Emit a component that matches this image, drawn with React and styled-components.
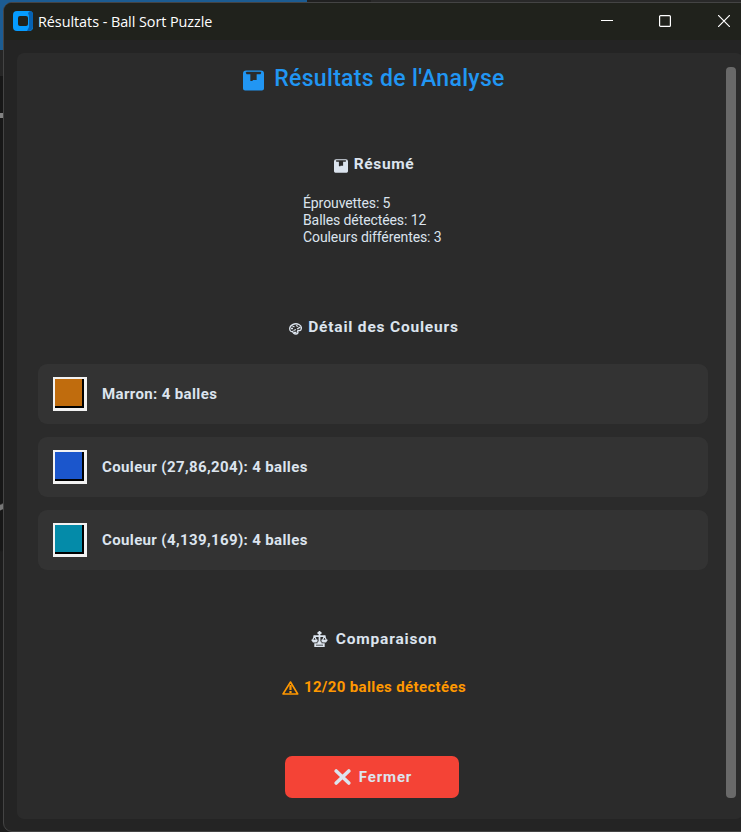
import React from 'react';
import styled, { createGlobalStyle } from 'styled-components';

const GlobalStyle = createGlobalStyle`
  * { box-sizing: border-box; }
  body { margin: 0; background: #1b1b1b; overflow: hidden; }
`;

const Desktop = styled.div`
  width: 741px;
  height: 832px;
  padding: 2px 0 0 3px;
  overflow: hidden;
  background:
    linear-gradient(#828282, #828282) 0 113px / 4px 5px no-repeat,
    linear-gradient(155deg, transparent 30%, #777 40%, #777 65%, transparent 72%) 0 499px / 4px 15px no-repeat,
    linear-gradient(#1c5c92, #1c5c92) 0 0 / 307px 3px no-repeat,
    linear-gradient(#1c5c92, #1c5c92) 0 0 / 12px 50px no-repeat,
    linear-gradient(#252525, #252525) 0 50px / 4px 26px no-repeat,
    linear-gradient(90deg, #202020 64px, #292929 64px) 307px 0 / 434px 3px no-repeat,
    linear-gradient(#171717 550px, #1d1d1d 552px);
  font-family: Roboto, "Noto Sans", sans-serif;
  color: #dce4ee;
`;

const Window = styled.main`
  width: 750px;
  height: 830px;
  border: 1px solid #444;
  border-radius: 9px;
  background: #242424;
  overflow: hidden;
`;

const TitleBar = styled.header`
  display: flex;
  align-items: center;
  width: 737px;
  height: 37px;
  padding: 0 0 1px 9px;
  background: #20221c;
  box-shadow: 20px 0 #20221c;
  color: #fff;
  > svg { margin-bottom: 1px; }
`;

const WindowTitle = styled.span`
  flex: 1;
  margin-left: 5px;
  font: 14.4px "Open Sans", "Noto Sans", sans-serif;
  letter-spacing: -0.05px;
  white-space: nowrap;
`;

const WindowControls = styled.div`
  display: flex;
  padding-right: 11px;
  svg { display: block; }
  svg + svg { margin-left: 46px; }
  svg:last-child { margin-left: 47px; }
`;

const Panel = styled.section`
  display: flex;
  width: 726px;
  height: 766px;
  margin: 13px 0 0 13px;
  border-radius: 7px;
  background: #2b2b2b;
`;

const Content = styled.div`
  width: 670px;
  margin-left: 21px;
  display: flex;
  flex-direction: column;
  align-items: center;
`;

const Scrollbar = styled.div`
  width: 10px;
  height: 731px;
  margin: 14px 0 0 18px;
  border-radius: 4px;
  background: #696969;
`;

const Heading = styled.h1`
  display: flex;
  align-items: center;
  gap: 10px;
  height: 28px;
  margin: 11px 0 0 2px;
  font-size: 23px;
  font-weight: 500;
  letter-spacing: 0.32px;
  color: #2196f3;
  white-space: nowrap;
  svg { margin-top: 5px; }
`;

const SectionTitle = styled.h2`
  display: flex;
  align-items: center;
  gap: ${({ $gap = 6 }) => $gap}px;
  height: 20px;
  margin: ${({ $top }) => $top}px 0 0 2px;
  font-size: 15.5px;
  font-weight: 700;
  letter-spacing: ${({ $tracking = 0.65 }) => $tracking}px;
  white-space: nowrap;
  svg { margin-top: ${({ $drop = 4 }) => $drop}px; }
`;

const Summary = styled.div`
  width: 140px;
  margin-top: 21px;
  font-size: 14px;
  line-height: 17px;
  letter-spacing: -0.1px;
  white-space: nowrap;
`;

const ColorList = styled.div`
  display: grid;
  gap: 13px;
  width: 100%;
  margin-top: 27px;
`;

const ColorRow = styled.div`
  display: flex;
  align-items: center;
  gap: 15px;
  height: 60px;
  padding-left: 15px;
  border-radius: 9px;
  background: #333;
  font-size: 15px;
  font-weight: 700;
  letter-spacing: 0.37px;
`;

const Swatch = styled.span`
  width: 34px;
  height: 34px;
  border: 2px solid #f2f2f2;
  border-right-width: 3px;
  border-bottom-width: 3px;
  background: ${({ $color }) => $color};
  box-shadow: inset -2px -2px #000;
`;

const Warning = styled.p`
  display: flex;
  align-items: center;
  gap: 5px;
  height: 20px;
  margin: 28px 0 0 2px;
  color: #ff9800;
  font-size: 15px;
  font-weight: 700;
  letter-spacing: 0.36px;
  svg { margin-top: 2px; }
`;

const CloseButton = styled.button`
  display: flex;
  align-items: center;
  justify-content: center;
  gap: 8px;
  width: 174px;
  height: 42px;
  margin: 59px 2px 0 0;
  padding: 0 0 0 2px;
  border: 0;
  border-radius: 7px;
  background: #f44336;
  color: #dce4ee;
  font: 700 15px Roboto, sans-serif;
  letter-spacing: 0.85px;
`;

const AppLogo = () => (
  <svg width="20" height="20" viewBox="0 0 20 20">
    <rect width="20" height="20" rx="4" fill="#069cff" />
    <path d="M15 2 17 0q3 0 3 4v11q0 5-5 5h-1l2-4V5Z" fill="#0662b2" />
    <rect x="5" y="5" width="10" height="10" rx="2" fill="#20221c" />
  </svg>
);

const BoxIcon = ({ size }) => (
  <svg width={size} height={size} viewBox="0 0 20 20">
    <path fillRule="evenodd" fill="currentColor" d="M3 0.5h14q3 0 3 3v14q0 2-2 2H2q-2 0-2-2v-14q0-3 3-3ZM3.5 1.7 2.5 2.5l1 1.5H7v6.5h2.2v-1H13V4h3.5l1-1.5-1-.8Z" />
  </svg>
);

const PaletteIcon = () => (
  <svg width="13" height="12" viewBox="0 0 13 12" fill="none" stroke="currentColor">
    <path d="M4 1.4Q7 0 10 1.5 13 3 12.2 6 12 8 9 7.5 8 8 9 9q0 2-2 2Q4 11 3.7 8.5 1 9 .7 6 .6 3 4 1.4Z" strokeWidth="1.3" />
    <path d="M2 5.5h2M3.5 3l2 1M7 2.5l2 1M9.5 4.5h2M8 6l2-1M4.5 7.5 7 6.5M5 9.5h2.5" strokeWidth="1.3" />
  </svg>
);

const ScalesIcon = () => (
  <svg width="17" height="16" viewBox="0 0 17 16" fill="none" stroke="currentColor">
    <path d="M8.5 0v13M6.5 2h4M2.5 5.2h12" strokeWidth="1.8" />
    <path d="M3.5 5 1.5 9.5M3.5 5 5.5 9.5M13.5 5 11.5 9.5M13.5 5 15.5 9.5" strokeWidth="1.2" />
    <path d="M0 8.8h7L5.5 11.5H2ZM10 8.8h7l-2 2.7h-3.5ZM6.5 10.5h4v1.8h3.2V16H3.3v-3.7h3.2Z" fill="currentColor" stroke="none" />
    <path d="M5 14.2h7" stroke="#2b2b2b" strokeWidth=".8" />
  </svg>
);

const WarningIcon = () => (
  <svg width="17" height="14" viewBox="0 0 17 14" fill="none" stroke="currentColor" strokeWidth="1.6">
    <path d="M8.5 1 15.7 13H1Z" strokeLinejoin="round" />
    <path d="M8.5 4v5M8.5 10v2" strokeWidth="2.2" />
  </svg>
);

const CrossIcon = () => (
  <svg width="17" height="16" viewBox="0 0 17 16" fill="none" stroke="currentColor" strokeWidth="3.6" strokeLinecap="round">
    <path d="m2.2 2 12.6 12M14.8 2 2.2 14" />
  </svg>
);

const COLORS = [
  { color: '#c06c0d', label: 'Marron: 4 balles' },
  { color: 'rgb(27,86,204)', label: 'Couleur (27,86,204): 4 balles' },
  { color: 'rgb(4,139,169)', label: 'Couleur (4,139,169): 4 balles' },
];

export default function App() {
  return (
    <Desktop>
      <GlobalStyle />
      <Window>
        <TitleBar>
          <AppLogo />
          <WindowTitle>Résultats - Ball Sort Puzzle</WindowTitle>
          <WindowControls>
            <svg width="12" height="12" stroke="#fff"><path d="M0 5.5h12" /></svg>
            <svg width="12" height="12" fill="none" stroke="#fff"><rect x=".6" y=".6" width="10.8" height="10.8" rx="1" strokeWidth="1.2" /></svg>
            <svg width="12" height="12" stroke="#fff" strokeWidth="1.2"><path d="m0 0 12 12M12 0 0 12" /></svg>
          </WindowControls>
        </TitleBar>
        <Panel>
          <Content>
            <Heading><BoxIcon size={21} /><span>Résultats de l'Analyse</span></Heading>
            <SectionTitle $top={62}><BoxIcon size={14} /><span>Résumé</span></SectionTitle>
            <Summary>
              <div>Éprouvettes: 5</div>
              <div>Balles détectées: 12</div>
              <div>Couleurs différentes: 3</div>
            </Summary>
            <SectionTitle $top={71} $tracking={0.8}><PaletteIcon /><span>Détail des Couleurs</span></SectionTitle>
            <ColorList>
              {COLORS.map(({ color, label }) => (
                <ColorRow key={label}><Swatch $color={color} /><span>{label}</span></ColorRow>
              ))}
            </ColorList>
            <SectionTitle $top={59} $gap={8} $drop={0} $tracking={0.82}><ScalesIcon /><span>Comparaison</span></SectionTitle>
            <Warning><WarningIcon /><span>12/20 balles détectées</span></Warning>
            <CloseButton><CrossIcon /><span>Fermer</span></CloseButton>
          </Content>
          <Scrollbar />
        </Panel>
      </Window>
    </Desktop>
  );
}
